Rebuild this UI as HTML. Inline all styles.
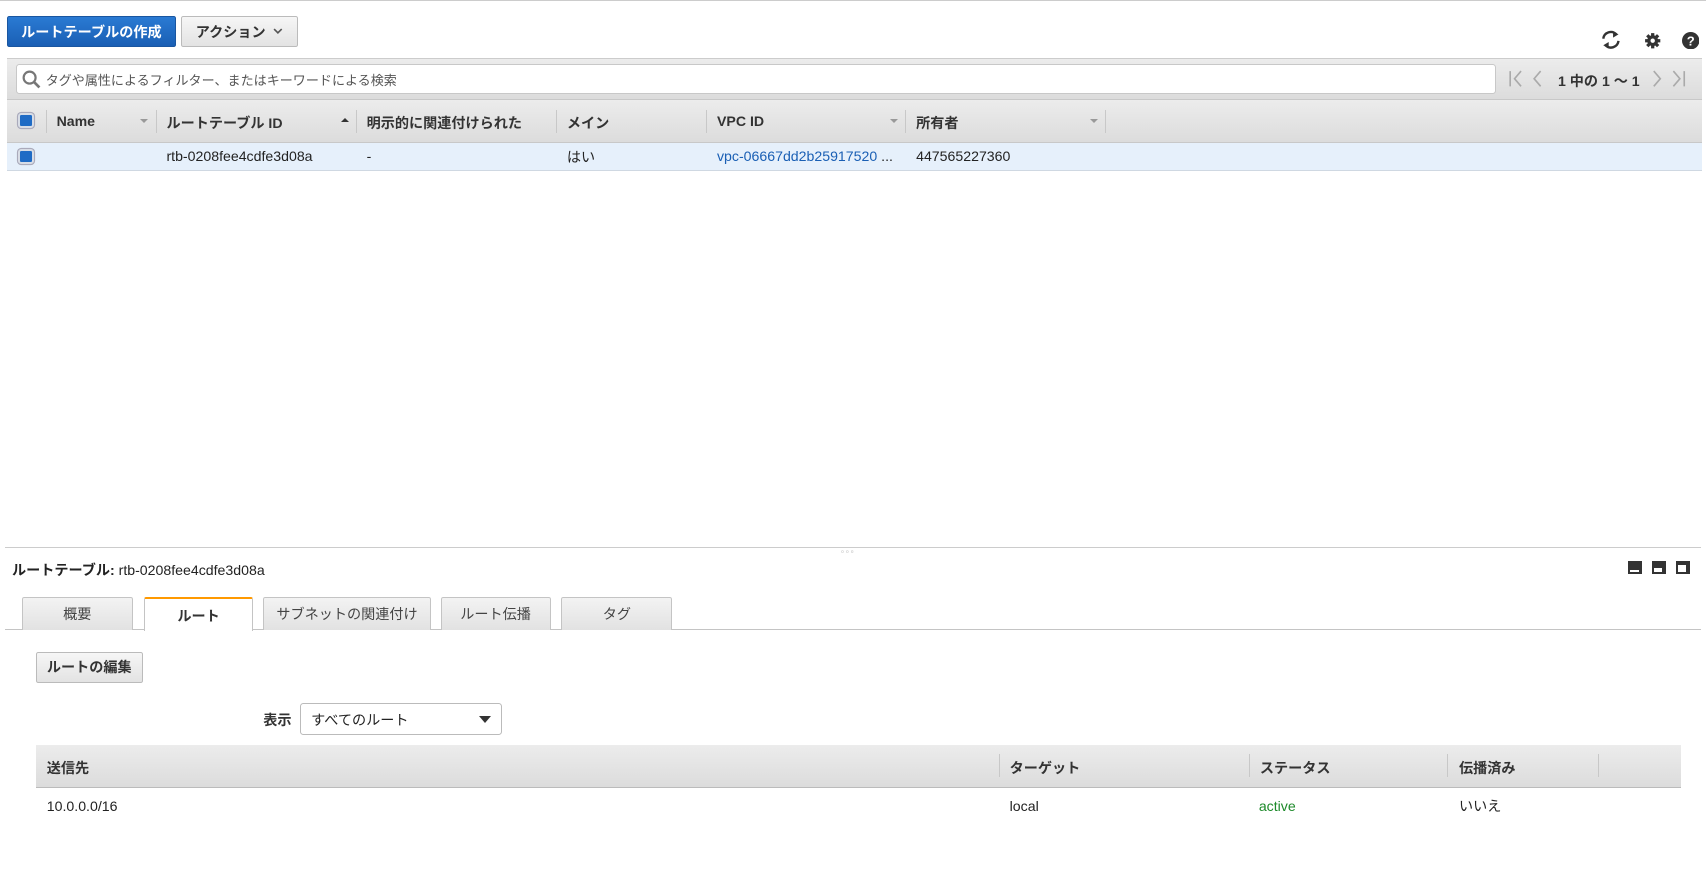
<!DOCTYPE html>
<html><head><meta charset="utf-8"><style>
*{box-sizing:border-box;margin:0;padding:0}
html,body{width:1706px;height:875px;overflow:hidden;background:#fff}
#r{zoom:1.088;width:1568px;height:805px;position:relative;font-family:"Liberation Sans","Noto Sans CJK JP",sans-serif;font-size:13px;color:#222}
.a{position:absolute}
.btn{position:absolute;border:1px solid #bbb;border-radius:2px;background:linear-gradient(#f6f6f6,#e3e3e3);font-weight:bold;font-size:13px;color:#333;display:flex;align-items:center;justify-content:center}
.hd{background:linear-gradient(#ececec,#dcdcdc)}
.sep{position:absolute;width:1px;background:#c8c8c8}
.cb{position:absolute;width:14px;height:14px;border-radius:3px;background:#1f6bc5;border:2px solid #d8dde6;box-shadow:0 0 0 1px #aab}
.th{position:absolute;font-weight:bold;color:#333}
.tri{position:absolute;width:0;height:0;border-left:4px solid transparent;border-right:4px solid transparent}
.tab{position:absolute;top:549px;height:30px;border:1px solid #c4c4c4;border-bottom:none;border-radius:2px 2px 0 0;background:linear-gradient(#f3f3f3,#e2e2e2);color:#444;display:flex;align-items:center;justify-content:center;font-size:13px}
</style></head><body><div id="r">
<div class="a" style="left:0;top:0;width:1568px;height:1px;background:#ccc"></div>
<div class="btn" style="left:6px;top:15px;width:156px;height:28px;background:linear-gradient(#2a7ad3,#1a5fb4);border-color:#1a56a0;color:#fff">ルートテーブルの作成</div>
<div class="btn" style="left:166px;top:15px;width:108px;height:28px">アクション <svg style="margin-left:7px" width="9" height="6" viewBox="0 0 9 6"><path d="M1 1l3.5 3.5L8 1" stroke="#555" stroke-width="1.5" fill="none"/></svg></div>
<svg class="a" style="left:1471px;top:28px" width="20" height="18" viewBox="0 0 20 18"><path d="M3 8a7 7 0 0 1 12-4" stroke="#333" stroke-width="2.2" fill="none"/><path d="M17 10a7 7 0 0 1-12 4" stroke="#333" stroke-width="2.2" fill="none"/><path d="M12 1l5 3-5 3z" fill="#333"/><path d="M8 17l-5-3 5-3z" fill="#333"/></svg>
<svg class="a" style="left:1511px;top:29px" width="16" height="16" viewBox="0 0 16 16"><circle cx="8" cy="8" r="5" fill="#333"/><g stroke="#333" stroke-width="3"><path d="M8 1v14M1 8h14M3 3l10 10M13 3L3 13"/></g><circle cx="8" cy="8" r="2" fill="#fff"/></svg>
<svg class="a" style="left:1546px;top:29px" width="16" height="16" viewBox="0 0 16 16"><circle cx="8" cy="8" r="8" fill="#333"/><text x="8" y="12.5" font-size="12" font-weight="bold" fill="#fff" text-anchor="middle" font-family="Liberation Sans">?</text></svg>
<div class="a hd" style="left:6px;top:53px;width:1558px;height:39px;border-top:1px solid #ccc;border-bottom:1px solid #c8c8c8"></div>
<div class="a" style="left:15px;top:59px;width:1360px;height:27px;background:#fff;border:1px solid #c8c8c8;border-radius:3px"></div>
<svg class="a" style="left:20px;top:64px" width="18" height="18" viewBox="0 0 18 18"><circle cx="7" cy="7" r="5.5" stroke="#777" stroke-width="2" fill="none"/><path d="M11 11l5 5" stroke="#777" stroke-width="2.5"/></svg>
<div class="a" style="left:42px;top:64px;color:#555;font-size:12px">タグや属性によるフィルター、またはキーワードによる検索</div>
<svg class="a" style="left:1386px;top:64px" width="170" height="16" viewBox="0 0 170 16"><g stroke="#aaa" stroke-width="1.5" fill="none"><path d="M2 1v14M12 1L6 8l6 7"/><path d="M30 1l-6 7 6 7"/><path d="M134 1l6 7-6 7"/><path d="M152 1l6 7-6 7M162 1v14"/></g></svg>
<div class="a" style="left:1432px;top:65px;font-weight:bold;color:#333;font-size:13px">1 中の 1 〜 1</div>
<div class="a hd" style="left:6px;top:92px;width:1558px;height:39px;border-bottom:1px solid #c8c8c8"></div>
<div class="cb" style="left:17px;top:104px"></div>
<div class="sep" style="left:42px;top:101px;height:21px"></div>
<div class="th" style="left:52px;top:104px">Name</div><div class="tri" style="left:129px;top:109px;border-top:4px solid #999"></div>
<div class="sep" style="left:143px;top:101px;height:21px"></div>
<div class="th" style="left:153px;top:104px">ルートテーブル ID</div><div class="tri" style="left:313px;top:108px;border-bottom:4px solid #333"></div>
<div class="sep" style="left:327px;top:101px;height:21px"></div>
<div class="th" style="left:337px;top:104px">明示的に関連付けられた</div>
<div class="sep" style="left:511px;top:101px;height:21px"></div>
<div class="th" style="left:521px;top:104px">メイン</div>
<div class="sep" style="left:649px;top:101px;height:21px"></div>
<div class="th" style="left:659px;top:104px">VPC ID</div><div class="tri" style="left:818px;top:109px;border-top:4px solid #999"></div>
<div class="sep" style="left:832px;top:101px;height:21px"></div>
<div class="th" style="left:842px;top:104px">所有者</div><div class="tri" style="left:1002px;top:109px;border-top:4px solid #999"></div>
<div class="sep" style="left:1016px;top:101px;height:21px"></div>
<div class="a" style="left:6px;top:131px;width:1558px;height:26px;background:#e6f0fb;border-bottom:1px solid #cfd8e2"></div>
<div class="cb" style="left:17px;top:137px"></div>
<div class="a" style="left:153px;top:136px">rtb-0208fee4cdfe3d08a</div>
<div class="a" style="left:337px;top:136px">-</div>
<div class="a" style="left:521px;top:135px">はい</div>
<div class="a" style="left:659px;top:136px;color:#1a5fb4">vpc-06667dd2b25917520 <span style="color:#222">...</span></div>
<div class="a" style="left:842px;top:136px">447565227360</div>
<div class="a" style="left:5px;top:503px;width:1558px;height:1px;background:#ccc"></div>
<div class="a" style="left:773px;top:503px;font-size:7px;color:#999;letter-spacing:2px">▫▫▫</div>
<div class="a" style="left:11px;top:515px"><b>ルートテーブル:</b> rtb-0208fee4cdfe3d08a</div>
<div class="a" style="left:1496px;top:516px;width:13px;height:12px;background:#333"><div class="a" style="left:2px;top:8px;width:8px;height:2px;background:#fff"></div></div>
<div class="a" style="left:1518px;top:516px;width:13px;height:12px;background:#333"><div class="a" style="left:2px;top:6px;width:8px;height:4px;background:#fff"></div></div>
<div class="a" style="left:1540px;top:516px;width:13px;height:12px;background:#333"><div class="a" style="left:2px;top:3px;width:8px;height:7px;background:#fff"></div></div>
<div class="a" style="left:5px;top:578px;width:1558px;height:1px;background:#c4c4c4"></div>
<div class="tab" style="left:20px;width:102px">概要</div>
<div class="tab" style="left:132px;width:101px;background:#fff;border-top:2px solid #f90;height:31px;font-weight:bold;color:#333;padding-top:2px">ルート</div>
<div class="tab" style="left:242px;width:154px">サブネットの関連付け</div>
<div class="tab" style="left:405px;width:101px">ルート伝播</div>
<div class="tab" style="left:516px;width:102px">タグ</div>
<div class="btn" style="left:33px;top:599px;width:98px;height:29px">ルートの編集</div>
<div class="a" style="left:242px;top:653px;font-weight:bold;color:#333">表示</div>
<div class="a" style="left:276px;top:646px;width:185px;height:30px;border:1px solid #bbb;border-radius:3px;background:#fff"></div>
<div class="a" style="left:286px;top:653px">すべてのルート</div>
<div class="tri" style="left:440px;top:658px;border-left-width:6px;border-right-width:6px;border-top:7px solid #333"></div>
<div class="a hd" style="left:33px;top:685px;width:1512px;height:39px;border-bottom:1px solid #bbb"></div>
<div class="th" style="left:43px;top:697px">送信先</div>
<div class="sep" style="left:918px;top:693px;height:21px"></div>
<div class="th" style="left:928px;top:697px">ターゲット</div>
<div class="sep" style="left:1148px;top:693px;height:21px"></div>
<div class="th" style="left:1158px;top:697px">ステータス</div>
<div class="sep" style="left:1330px;top:693px;height:21px"></div>
<div class="th" style="left:1341px;top:697px">伝播済み</div>
<div class="sep" style="left:1469px;top:693px;height:21px"></div>
<div class="a" style="left:43px;top:733px">10.0.0.0/16</div>
<div class="a" style="left:928px;top:733px">local</div>
<div class="a" style="left:1157px;top:733px;color:#1d8a2a">active</div>
<div class="a" style="left:1341px;top:732px">いいえ</div>
</div></body></html>
